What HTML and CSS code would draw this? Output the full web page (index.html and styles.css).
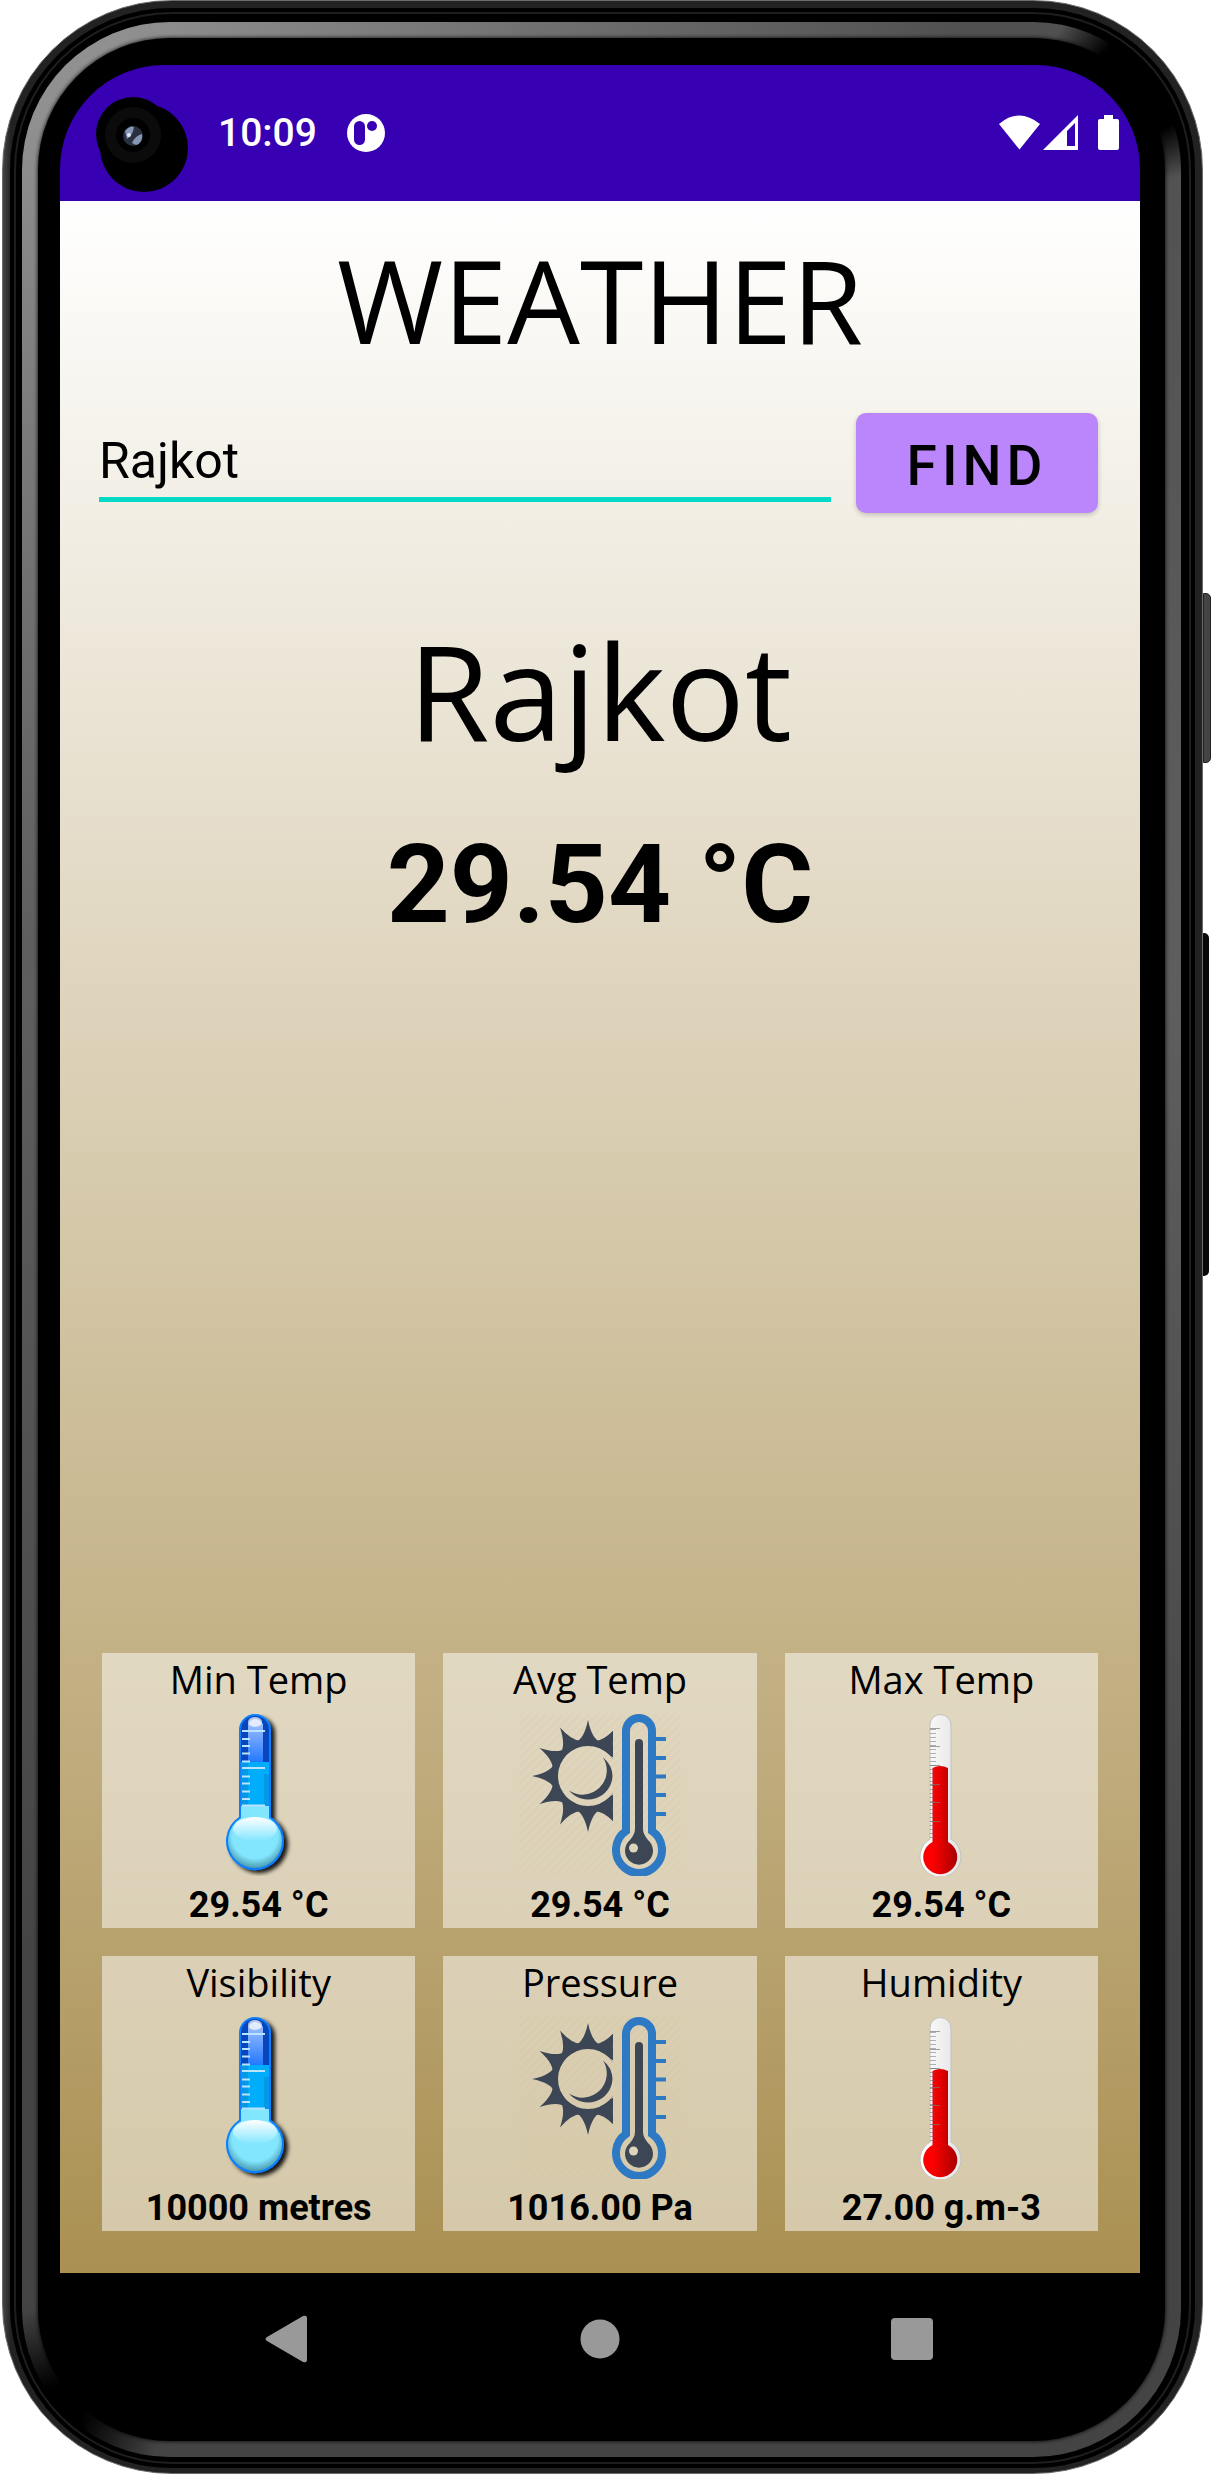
FILE: index.html
```html
<!DOCTYPE html>
<html lang="en">
<head>
<meta charset="utf-8">
<meta name="viewport" content="width=device-width, initial-scale=1">
<title>Weather</title>
<link rel="stylesheet" href="styles.css">
</head>
<body>
<svg class="defs" aria-hidden="true">
  <defs>
    <linearGradient id="coldTop" x2="0" y2="1"><stop offset="0" stop-color="#a9c6ff"/><stop offset="1" stop-color="#2478ff"/></linearGradient>
    <linearGradient id="gloss" x2="0" y2="1"><stop offset="0" stop-color="#fff"/><stop offset="1" stop-color="#fff" stop-opacity="0"/></linearGradient>
    <radialGradient id="coldBulb" cy=".4" r=".6"><stop offset=".7" stop-color="#83e6ff"/><stop offset="1" stop-color="#4b9cae"/></radialGradient>
    <linearGradient id="glass"><stop offset="0" stop-color="#fff"/><stop offset="1" stop-color="#e2e2e2"/></linearGradient>
    <linearGradient id="red"><stop offset=".3" stop-color="#fa0000"/><stop offset="1" stop-color="#a80000"/></linearGradient>
    <filter id="shade" x="-30%" y="-10%" width="170%" height="120%"><feDropShadow dx="4" dy="3" stdDeviation="2" flood-opacity=".9"/></filter>
    <clipPath id="sunClip"><path d="M0 0H94V162H0Z"/></clipPath>
    <pattern id="hatch" width="6" height="6" patternUnits="userSpaceOnUse" patternTransform="rotate(45)"><path d="M0 0H3V6H0Z" fill="#cdbf94" fill-opacity=".15"/></pattern>
    <path id="ray" d="M-14-30V-33Q-4-36 0-56Q4-36 14-33V-30Z"/>
    <symbol id="cold" viewBox="0 0 162 162">
      <path filter="url(#shade)" fill="#087eff" d="M61 103V16A16 16 0 0 1 93 16V103A29 29 0 1 1 61 103Z"/>
      <path fill="#0846bd" d="M63 48V16A14 14 0 0 1 91 16V48Z"/>
      <path fill="url(#coldTop)" d="M70 48V10Q77 0 85 10V48Z"/>
      <path fill="#00adfb" d="M63 48H91V92H63Z"/>
      <path fill="#087bc9" fill-opacity=".4" d="M63 48H70V92H63ZM86 60H91V92H86Z"/>
      <path fill="#83e6ff" d="M63 92H91V110H63Z"/>
      <circle cx="77" cy="127" r="27" fill="url(#coldBulb)"/>
      <ellipse cx="77" cy="115" rx="22" ry="12" fill="url(#gloss)"/>
      <ellipse cx="77" cy="8" rx="7" ry="5" fill="#fff" fill-opacity=".7"/>
      <path stroke="#b8e4ff" stroke-width="2" d="M64 17H87M64 54H87M64 91.500H87M64 25H72M64 32H72M64 39.500H72M64 47.500H72M64 62.500H72M64 69.500H72M64 77.500H72M64 85H72"/>
    </symbol>
    <symbol id="mild" viewBox="0 0 162 162">
      <path fill="url(#hatch)" d="M0 0H162V162H0Z"/>
      <g clip-path="url(#sunClip)" fill="#3c4654">
        <g transform="translate(69 62)">
          <circle r="32.500" fill="none" stroke="#3c4654" stroke-width="5"/>
          <use href="#ray"/><use href="#ray" transform="rotate(30)"/><use href="#ray" transform="rotate(150)"/>
          <use href="#ray" transform="rotate(180)"/><use href="#ray" transform="rotate(210)"/><use href="#ray" transform="rotate(240)"/>
          <use href="#ray" transform="rotate(270)"/><use href="#ray" transform="rotate(300)"/><use href="#ray" transform="rotate(330)"/>
        </g>
        <path fill="#ded4bc" d="M98 46L92 42Q98 51 98 62Q98 73 92 82L98 78L88 62Z"/>
        <path d="M84 43.500A24.500 24.500 0 0 1 93.500 62A24.500 24.500 0 0 1 50 76.500A24.200 24.200 0 0 0 84 43.500Z"/>
      </g>
      <path fill="none" stroke="#2d79c4" stroke-width="8" d="M107 117V17A13 13 0 0 1 133 17V117A23 23 0 1 1 107 117Z"/>
      <path stroke="#2d79c4" stroke-width="4" d="M136 25H147M136 44H147M136 62.500H147M136 81H147M136 100H147"/>
      <path fill="#3c4654" d="M116 29A4 4 0 0 1 124 29V115Q124 120 129 126A14 14 0 1 1 111 126Q116 120 116 115Z"/>
      <circle cx="114.500" cy="134" r="4.500" fill="#ded4bc"/>
    </symbol>
    <symbol id="hot" viewBox="0 0 162 162">
      <path fill="url(#glass)" stroke="#c3c1bd" d="M70 125V11A10.500 10.500 0 0 1 91 11V125A20.500 20.500 0 1 1 70 125Z"/>
      <path fill="url(#red)" d="M72.500 128V54Q80 50 88 54V128A17 17 0 1 1 72.500 128Z"/>
      <path stroke="#777" stroke-opacity=".55" stroke-width="6" stroke-dasharray="1 3" d="M73 15V51"/>
      <path stroke="#555" stroke-opacity=".5" stroke-width="6" stroke-dasharray="1 3" d="M73 51V124"/>
      <path stroke="#777" stroke-opacity=".7" d="M70 14.500H80M70 32.500H80M70 51.500H80M70 70.500H80M70 88.500H80M70 107.500H80"/>
    </symbol>
  </defs>
</svg>
<div class="phone">
  <span class="side-button side-button-power"></span>
  <span class="side-button side-button-volume"></span>
  <div class="shell"><div class="ridge"><div class="glow"><div class="bezel">
    <div class="screen">
      <header class="status">
        <svg class="camera" viewBox="0 0 94 96" aria-hidden="true">
          <circle cx="38" cy="37" r="37"/><circle cx="49" cy="51" r="44"/>
          <circle cx="38" cy="38" r="28" fill="#0b0b0b"/><circle cx="38" cy="38" r="17"/>
          <circle cx="38" cy="39" r="10" fill="#29313f"/>
          <path fill="#8597b5" d="M30 34Q35 28 39 30Q38 38 32 42ZM37 46Q40 39 47 37Q48 46 41 48Z"/>
          <circle cx="34" cy="38" r="2" fill="#dce6f5"/>
        </svg>
        <time class="clock">10:09</time>
        <svg class="app-mark" viewBox="0 0 38 38" aria-hidden="true">
          <circle cx="19" cy="19" r="19" fill="#fff"/><rect x="7" y="7" width="11" height="24" rx="5.500" fill="#3700b3"/><circle cx="25" cy="12" r="5" fill="#3700b3"/>
        </svg>
        <svg class="signals" viewBox="0 0 120 36" aria-label="Wi-Fi, signal, battery">
          <g fill="#fff">
            <path d="M0 9Q20-8 41 9L20.500 34.500Z"/>
            <path fill-rule="evenodd" d="M44 35L79 0V35ZM68 16L76 8V31H68Z"/>
            <path d="M105 0H114V4H118Q120 4 120 6V33Q120 35 118 35H101Q99 35 99 33V6Q99 4 101 4H105Z"/>
          </g>
        </svg>
      </header>
      <main class="weather">
        <h1 class="title">WEATHER</h1>
        <form class="search">
          <input class="city-input" type="text" value="Rajkot" aria-label="City">
          <button class="find" type="button">FIND</button>
        </form>
        <h2 class="city">Rajkot</h2>
        <p class="temperature">29.54 °C</p>
        <section class="details">
          <article class="card"><h3 class="label">Min Temp</h3><svg class="icon" aria-hidden="true"><use href="#cold"/></svg><p class="value">29.54 °C</p></article>
          <article class="card"><h3 class="label">Avg Temp</h3><svg class="icon" aria-hidden="true"><use href="#mild"/></svg><p class="value">29.54 °C</p></article>
          <article class="card"><h3 class="label">Max Temp</h3><svg class="icon" aria-hidden="true"><use href="#hot"/></svg><p class="value">29.54 °C</p></article>
          <article class="card"><h3 class="label">Visibility</h3><svg class="icon" aria-hidden="true"><use href="#cold"/></svg><p class="value">10000 metres</p></article>
          <article class="card"><h3 class="label">Pressure</h3><svg class="icon" aria-hidden="true"><use href="#mild"/></svg><p class="value">1016.00 Pa</p></article>
          <article class="card"><h3 class="label">Humidity</h3><svg class="icon" aria-hidden="true"><use href="#hot"/></svg><p class="value">27.00 g.m-3</p></article>
        </section>
      </main>
    </div>
    <nav class="nav">
      <button class="nav-button" type="button" aria-label="Back"><svg viewBox="0 0 48 48"><path d="M4 22L40 1Q44 0 44 3V45Q44 48 40 47L4 26Q1 24 4 22Z"/></svg></button>
      <button class="nav-button" type="button" aria-label="Home"><svg viewBox="0 0 48 48"><circle cx="24" cy="24" r="19.500"/></svg></button>
      <button class="nav-button" type="button" aria-label="Recent apps"><svg viewBox="0 0 48 48"><rect x="2" y="3" width="42" height="42" rx="4"/></svg></button>
    </nav>
  </div></div></div></div>
</div>
</body>
</html>
```
FILE: styles.css
```css
* { box-sizing: border-box; }

body {
  margin: 0;
  background: #fff;
  color: #000;
  font-family: Roboto, "Liberation Sans", sans-serif;
}

h1, h2, h3, p { margin: 0; }

.defs { position: absolute; width: 0; height: 0; }

/* Device frame */
.phone {
  position: relative;
  display: flex;
  min-height: 100vh;
  padding: 0 8px 0 2px;
}

.shell, .ridge, .glow, .bezel {
  display: flex;
  flex: 1;
  min-width: 0;
}

.shell {
  padding: 7px 7px 5px;
  border: 1px solid #6b6b6b;
  border-radius: 170px;
  background: linear-gradient(90deg, #444, #222 8px, #222);
}

.ridge {
  padding: 14px 14px 11px 12px;
  border-radius: 162px;
  background: #000;
  box-shadow: inset 0 0 0 4px #000, inset 0 0 0 6px #1e1e1e;
}

.glow {
  padding: 16px;
  border-radius: 148px;
  background:
    radial-gradient(circle at calc(100% - 36px) 60px, #000 50px, transparent 100px),
    radial-gradient(circle at 30px calc(100% - 40px), #000 30px, transparent 110px),
    radial-gradient(circle at 40px 40px, #909090 60px, rgba(112, 112, 112, 0) 900px),
    linear-gradient(#505050, #5e5e5e 40%, #444 80%);
}

.bezel {
  flex-direction: column;
  padding: 27px 25px 0 22px;
  border-radius: 132px;
  background: #000;
  box-shadow: 0 0 4px #000;
}

.side-button {
  position: absolute;
  right: 0;
  width: 8px;
  border-radius: 0 5px 5px 0;
}

.side-button-power { top: 593px; height: 170px; border: 1px solid #222; background: #444; }
.side-button-volume { top: 933px; right: 2px; width: 6px; height: 343px; background: #080808; }

.screen {
  display: flex;
  flex: 1;
  flex-direction: column;
  overflow: hidden;
  border-radius: 104px 104px 0 0;
}

/* Status bar */
.status {
  position: relative;
  display: flex;
  align-items: center;
  height: 136px;
  padding: 0 21px 0 158px;
  background: #3700b3;
  color: #fff;
}

.camera { position: absolute; left: 35px; top: 32px; width: 94px; height: 96px; }
.clock { font-size: 39px; font-weight: 500; }
.app-mark { width: 38px; height: 38px; margin-left: 30px; }
.signals { width: 120px; height: 36px; margin-left: auto; }

/* Weather page */
.weather {
  display: flex;
  flex: 1;
  flex-direction: column;
  padding: 21px 39px 42px;
  background: linear-gradient(#fff, #aa9052);
}

.title, .city, .label {
  font-family: "Open Sans", "Noto Sans", sans-serif;
  font-weight: 400;
  text-align: center;
}

.title { font-size: 115px; line-height: 156px; }

.search {
  display: flex;
  align-items: center;
  gap: 25px;
  margin-top: 35px;
  padding-right: 3px;
}

.city-input {
  flex: 1;
  min-width: 0;
  height: 78px;
  padding: 0;
  border: 0;
  border-bottom: 5px solid #03dac5;
  background: transparent;
  color: #000;
  font: 400 50px Roboto, sans-serif;
  outline: 0;
}

.find {
  width: 242px;
  height: 100px;
  padding: 6px 0 0;
  border: 0;
  border-radius: 10px;
  background: #bb86fc;
  box-shadow: 0 2px 5px rgba(0, 0, 0, .2);
  color: #000;
  font: 500 55px Roboto, sans-serif;
  letter-spacing: 5px;
}

.city { margin-top: 89px; font-size: 132px; line-height: 176px; }

.temperature {
  margin-top: 43px;
  font-size: 110px;
  font-weight: 700;
  line-height: 128px;
  text-align: center;
}

.details {
  display: grid;
  grid-template-columns: repeat(3, 1fr);
  gap: 28px;
  margin-top: auto;
  padding: 0 3px;
}

.card {
  display: flex;
  flex-direction: column;
  align-items: center;
  padding-bottom: 2px;
  background: rgba(255, 255, 255, .5);
}

.label { font-size: 38px; line-height: 52px; }
.icon { width: 162px; height: 162px; margin: 9px 0 8px; }
.value { font-size: 36px; font-weight: 700; line-height: 42px; }

/* Navigation buttons */
.nav {
  display: grid;
  grid-template-columns: repeat(3, 1fr);
  justify-items: center;
  padding: 42px 71px 78px;
}

.nav-button {
  width: 48px;
  height: 48px;
  padding: 0;
  border: 0;
  background: transparent;
  fill: #999;
}

.nav-button svg { display: block; width: 48px; height: 48px; }
```
